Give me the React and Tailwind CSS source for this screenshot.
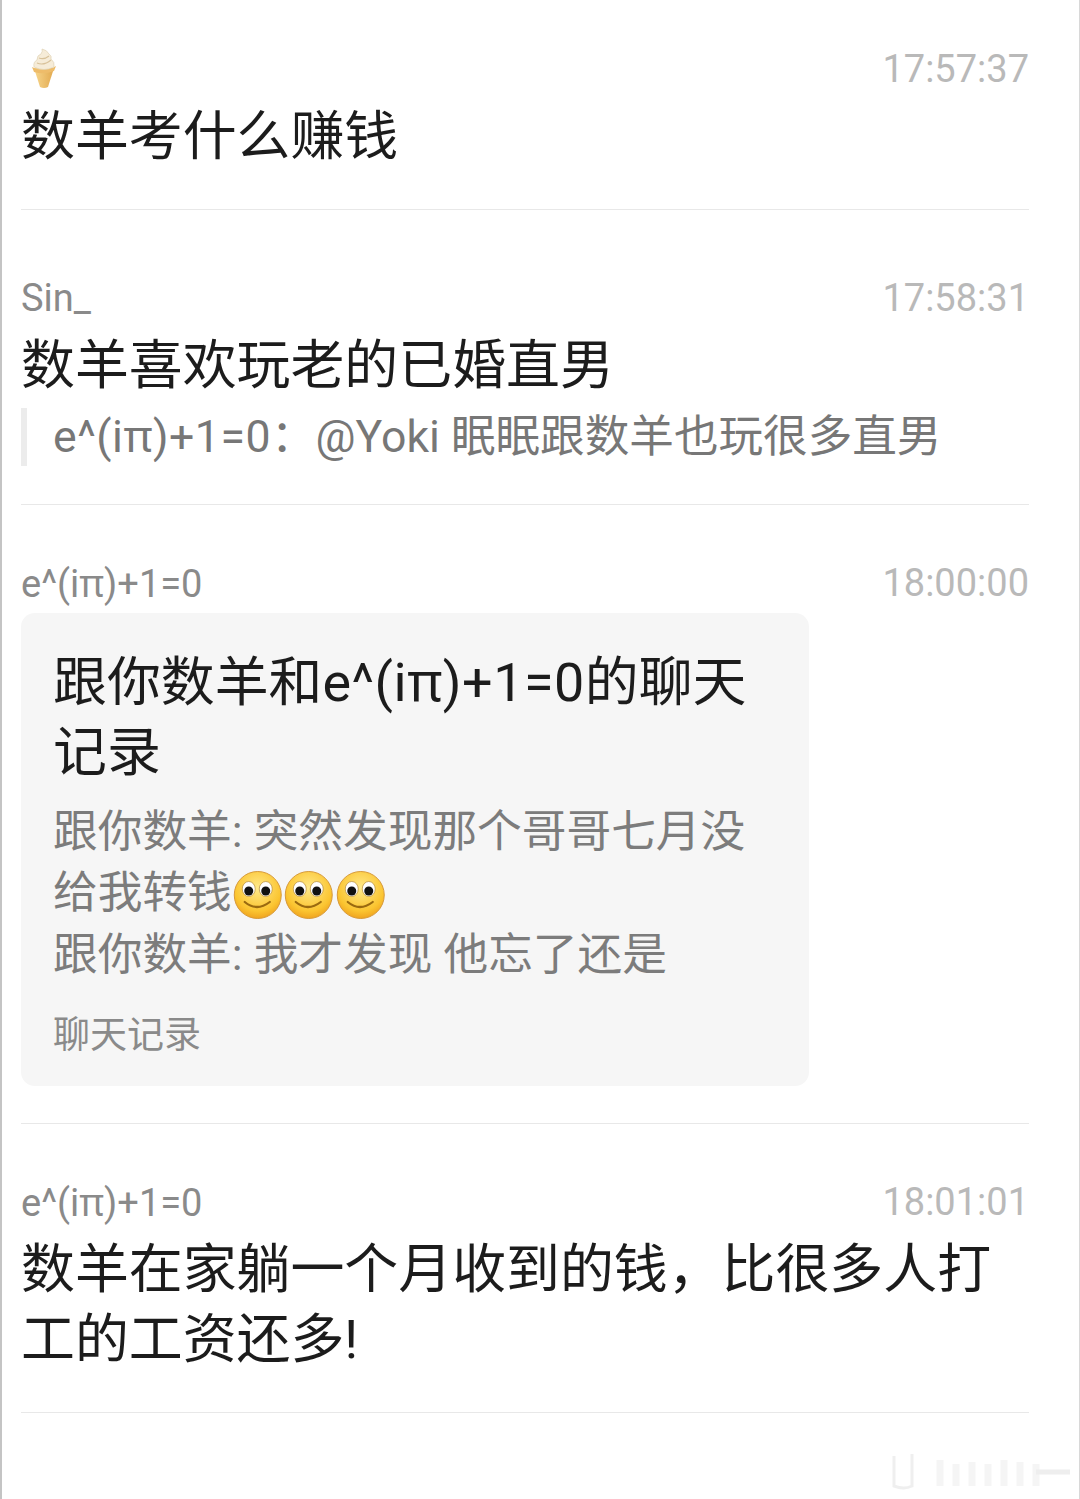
const Pi = () => <span className="leading-none" style={{ fontFamily: '"Noto Sans", sans-serif' }}>π</span>;

const Formula = () => (
  <>e^(i<Pi />)+1=0</>
);

const IceCream = () => (
  <svg className="ml-2" width="30" height="42" viewBox="0 0 30 42">
    <defs>
      <linearGradient id="cone" x1="0" y1="0" x2="1" y2="0">
        <stop offset="0" stopColor="#f7d68c" />
        <stop offset="1" stopColor="#e2a94f" />
      </linearGradient>
    </defs>
    <path d="M5 20 L25 20 L19 39 Q15 41 11 39 Z" fill="url(#cone)" />
    <path d="M3 19 Q15 26 27 18 L25 23 Q15 27 5 24 Z" fill="#eebc6a" />
    <path d="M5 19 Q4 14 8 12 Q8 7 12 6 Q14 3 13 1 Q18 2 20 6 Q23 8 22 11 Q26 14 25 19 Q15 24 5 19 Z" fill="#f6ecd8" stroke="#e0d2b6" strokeWidth="0.7" />
    <path d="M8 15 Q15 18 22 12 M10 10 Q15 12 20 8" fill="none" stroke="#d8c29a" strokeWidth="1.2" />
  </svg>
);

const Smiley = ({ id }) => (
  <svg className="inline-block align-[-12px]" width="51.5" height="50" viewBox="-0.75 0 51.5 50">
    <defs>
      <radialGradient id={id} cx="0.5" cy="0.35" r="0.7">
        <stop offset="0" stopColor="#ffe98a" />
        <stop offset="0.7" stopColor="#fbc531" />
        <stop offset="1" stopColor="#ec9a1a" />
      </radialGradient>
    </defs>
    <circle cx="25" cy="25" r="23.5" fill={`url(#${id})`} stroke="#d79a3a" strokeWidth="1" />
    <ellipse cx="16" cy="19" rx="6.5" ry="7.5" fill="#fff" stroke="#b58a3a" strokeWidth="0.7" />
    <ellipse cx="33" cy="19" rx="6.5" ry="7.5" fill="#fff" stroke="#b58a3a" strokeWidth="0.7" />
    <circle cx="16" cy="21" r="4.5" fill="#111" />
    <circle cx="33" cy="21" r="4.5" fill="#111" />
    <path d="M12 32 Q24 42 37 32" fill="none" stroke="#9a6a10" strokeWidth="2.2" strokeLinecap="round" />
  </svg>
);

const Header = ({ name, time }) => (
  <div className="flex h-10 items-center justify-between text-[38px] leading-10">
    <span className="text-[#8a8a8a]">{name}</span>
    <span className="text-[#b9b9b9]">{time}</span>
  </div>
);

const Message = ({ children }) => (
  <p className="mt-[13px] text-[53.9px] leading-[70px] text-[#1c1c1c]">{children}</p>
);

export default function App() {
  return (
    <div
      className="relative h-[1499px] w-[1080px] overflow-hidden border-x border-l-2 border-l-[#c4c4c4] border-r-[#d8d8d8] bg-white pl-[19px] pr-[50px]"
      style={{ fontFamily: 'Roboto, "Noto Sans CJK SC", sans-serif' }}
    >
      <section className="border-b border-[#e8e8e8] pt-[49px] pb-[37px]">
        <Header name={<IceCream />} time="17:57:37" />
        <Message>数羊考什么赚钱</Message>
      </section>

      <section className="border-b border-[#e8e8e8] pt-[68px] pb-[38px]">
        <Header name="Sin_" time="17:58:31" />
        <Message>数羊喜欢玩老的已婚直男</Message>
        <div className="mt-[7px] border-l-[6px] border-[#ececec] pl-[26px] text-[44.6px] leading-[58px] whitespace-nowrap text-[#777777]">
          <span className="tracking-[0.5px]"><Formula /></span>：@Yoki 眠眠跟数羊也玩很多直男
        </div>
      </section>

      <section className="border-b border-[#e8e8e8] pt-[58px] pb-[37px]">
        <Header name={<Formula />} time="18:00:00" />
        <div className="mt-[10px] w-[788px] rounded-[14px] bg-[#f6f6f6] px-8 pt-[35px] pb-[30px]">
          <h2 className="text-[53.9px] font-normal leading-[70px] text-[#1c1c1c]">
            跟你数羊和<span className="tracking-[0.5px]"><Formula /></span>的聊天<br />记录
          </h2>
          <div className="mt-[14px] text-[44.7px] leading-[61px] text-[#7c7c7c]">
            <p className="pb-px">跟你数羊: 突然发现那个哥哥七月没<br />给我转钱<Smiley id="s1" /><Smiley id="s2" /><Smiley id="s3" /></p>
            <p>跟你数羊: 我才发现 他忘了还是</p>
          </div>
          <div className="mt-[30px] text-[37px] leading-10 text-[#8a8a8a]">聊天记录</div>
        </div>
      </section>

      <section className="border-b border-[#e8e8e8] pt-[58px] pb-[37px]">
        <Header name={<Formula />} time="18:01:01" />
        <Message>数羊在家躺一个月收到的钱，比很多人打<br />工的工资还多!</Message>
      </section>

      {/* faint watermark bottom right */}
      <svg className="absolute top-[1450px] left-[878px] opacity-60" width="195" height="45" viewBox="0 0 195 45">
        <path d="M14 6 V36 Q24 40 32 36 V4" fill="none" stroke="#e6e6e6" strokeWidth="3" />
        <g stroke="#efefef" strokeWidth="7">
          <path d="M60 10 V36 M76 14 V36 M92 12 V36 M108 14 V36 M124 10 V36 M140 12 V36 M156 14 V36" />
        </g>
        <path d="M156 22 H190" stroke="#e4e4e4" strokeWidth="5" />
      </svg>
    </div>
  );
}
